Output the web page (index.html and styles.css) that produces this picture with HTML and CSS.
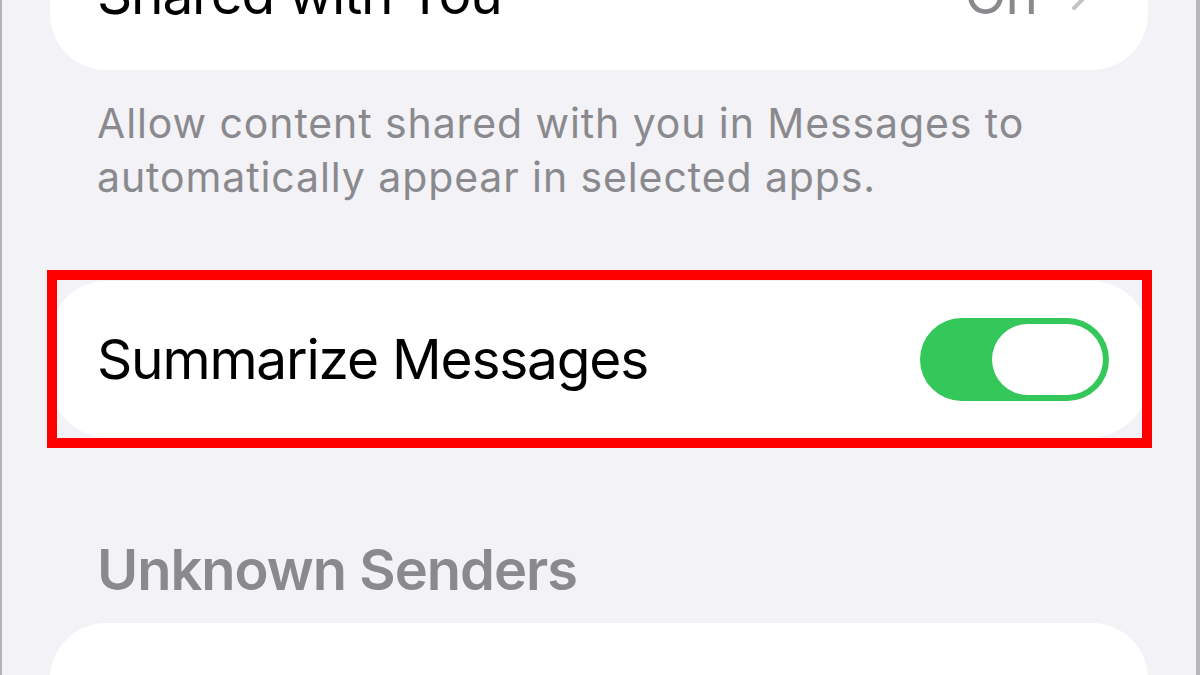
FILE: index.html
```html
<!DOCTYPE html>
<html lang="en">
<head>
<meta charset="utf-8">
<title>Messages Settings</title>
<link rel="stylesheet" href="styles.css">
</head>
<body>
<div class="screen">
  <div class="card card-top">
    <div class="row">
      <span class="label">Shared with You</span>
      <span class="value">On</span>
      <svg class="chevron" viewBox="0 0 18 30" width="18" height="30"><path d="M3 3 L15 15 L3 27" fill="none" stroke="#c4c4c7" stroke-width="4" stroke-linecap="round" stroke-linejoin="round"/></svg>
    </div>
  </div>
  <p class="footer">Allow content shared with you in Messages to automatically appear in selected apps.</p>
  <div class="highlight-wrap">
    <div class="card">
      <div class="row">
        <span class="label">Summarize Messages</span>
        <span class="toggle"><span class="knob"></span></span>
      </div>
    </div>
    <div class="highlight"></div>
  </div>
  <h2 class="header">Unknown Senders</h2>
  <div class="card card-bottom"></div>
</div>
</body>
</html>
```

FILE: styles.css
```css
html, body {
  margin: 0;
  padding: 0;
  background: #f2f2f7;
}
.screen {
  width: 1200px;
  height: 675px;
  box-sizing: border-box;
  border-left: 2px solid #b4b4b6;
  border-right: 4px solid #b8b8ba;
  background: #f2f2f7;
  overflow: hidden;
  padding: 0 48px 0 48px;
  font-family: "Inter", "Liberation Sans", sans-serif;
}
.card {
  background: #fff;
  border-radius: 56px;
  height: 156px;
}
.card-top {
  margin-top: -86px;
}
.card-top .row {
  padding-top: 4px;
}
.row {
  height: 100%;
  box-sizing: border-box;
  display: flex;
  align-items: center;
  padding: 0 39px 0 47px;
}
.label {
  font-size: 55px;
  color: #000;
  flex: 1;
  letter-spacing: -1.2px;
}
.value {
  font-size: 55px;
  color: #8a8a8e;
  margin-right: 34px;
  letter-spacing: -1px;
}
.chevron {
  margin-right: 20px;
  margin-top: 4px;
}
.footer {
  margin: 0;
  padding: 26px 40px 0 47px;
  font-size: 41px;
  line-height: 54px;
  letter-spacing: 0.9px;
  color: #8a8a8e;
  height: 189px;
  box-sizing: border-box;
}
.highlight-wrap {
  position: relative;
  margin-top: 22px;
}
.highlight {
  position: absolute;
  left: -3px;
  top: -11px;
  right: -4px;
  bottom: -11px;
  border: 10px solid #ff0000;
  pointer-events: none;
}
.toggle {
  width: 189px;
  height: 83px;
  border-radius: 42px;
  background: #34c759;
  display: flex;
  align-items: center;
  justify-content: flex-end;
  padding-right: 6px;
  box-sizing: border-box;
}
.knob {
  width: 111px;
  height: 71px;
  border-radius: 36px;
  background: #fff;
}
.header {
  margin: 0;
  padding: 99px 0 0 47px;
  font-size: 56px;
  line-height: 68px;
  font-weight: 600;
  letter-spacing: -1px;
  color: #8a8a8e;
  height: 186px;
  box-sizing: border-box;
}
.card-bottom {
  height: 200px;
}
```
